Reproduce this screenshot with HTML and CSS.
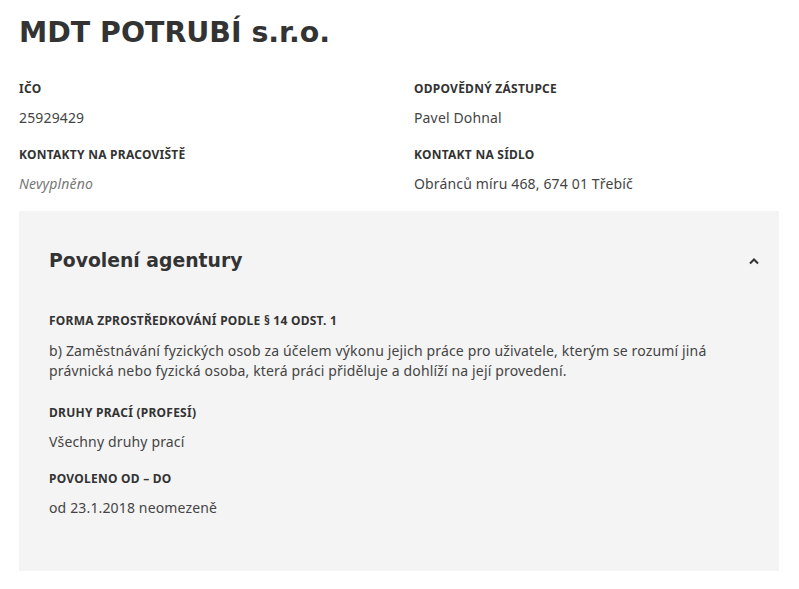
FILE: index.html
```html
<!DOCTYPE html>
<html lang="cs">

<head>
    <meta charset="UTF-8">
    <meta name="viewport" content="width=device-width, initial-scale=1.0">
    <title>MDT POTRUBÍ s.r.o.</title>
    <link rel="stylesheet" href="styles.css">
</head>

<body>

    <div id="firmContainer">
        <h1>MDT POTRUBÍ s.r.o.</h1>

        <div class="info-grid">
            <div class="info-item">
                <h4>IČO</h4>
                <p>25929429</p>
            </div>
            <div class="info-item">
                <h4>Odpovědný zástupce</h4>
                <p>Pavel Dohnal</p>
            </div>
            <div class="info-item">
                <h4>Kontakty na pracoviště</h4>
                <p class="empty">Nevyplněno</p>
            </div>
            <div class="info-item">
                <h4>Kontakt na sídlo</h4>
                <p>Obránců míru 468, 674 01 Třebíč</p>
            </div>
        </div>

        <div class="panel">
            <div class="panel-head">
                <h2>Povolení agentury</h2>
                <svg class="chevron" width="12" height="8" viewBox="0 0 12 8">
                    <path d="M2 6.5 L6 2.5 L10 6.5" fill="none" stroke="#333" stroke-width="2" />
                </svg>
            </div>
            <div class="panel-body">
                <div class="info-item long">
                    <h4>Forma zprostředkování podle § 14 odst. 1</h4>
                    <p>b) Zaměstnávání fyzických osob za účelem výkonu jejich práce pro uživatele, kterým se rozumí jiná
                        právnická nebo fyzická osoba, která práci přiděluje a dohlíží na její provedení.</p>
                </div>
                <div class="info-item">
                    <h4>Druhy prací (profesí)</h4>
                    <p>Všechny druhy prací</p>
                </div>
                <div class="info-item">
                    <h4>Povoleno od – do</h4>
                    <p>od 23.1.2018 neomezeně</p>
                </div>
            </div>
        </div>
    </div>

</body>

</html>
```

FILE: styles.css
```css
body {
    font-family: "Noto Sans", "Open Sans", sans-serif;
    color: #444;
    /* Màu chữ chính */
    background: #fff;
    margin: 0;
    padding: 0 20px 0 19px;
}

h1 {
    font-family: "DejaVu Sans", Verdana, sans-serif;
    font-size: 28.4px;
    font-weight: bold;
    color: #333;
    margin: 15px 0 29px;
    line-height: 36px;
}

.info-grid {
    display: grid;
    grid-template-columns: 395px 1fr;
}

.info-item h4 {
    font-size: 12px;
    font-weight: bold;
    text-transform: uppercase;
    letter-spacing: 0.25px;
    color: #333;
    margin: 0;
    line-height: 18px;
}

.info-item p {
    font-size: 14px;
    line-height: 20px;
    letter-spacing: 0.15px;
    margin: 10px 0 18px;
}

.info-item p.empty {
    font-style: italic;
    color: #777;
}

.panel {
    background-color: #f4f4f4;
    /* Nền xám nhạt */
    padding: 30px 30px 53px;
    margin-top: -1px;
}

.panel-head {
    display: flex;
    justify-content: space-between;
    align-items: center;
    padding: 10px 0;
}

.panel-head h2 {
    font-family: "DejaVu Sans", Verdana, sans-serif;
    font-size: 18.8px;
    font-weight: bold;
    color: #333;
    margin: 0;
    line-height: 20px;
}

.chevron {
    margin-right: -11px;
}

.panel-body {
    margin-top: 31px;
}

.panel-body .info-item.long p {
    margin: 11px 0 23px;
}

.panel-body .info-item:last-child p {
    margin-bottom: 0;
}
```
